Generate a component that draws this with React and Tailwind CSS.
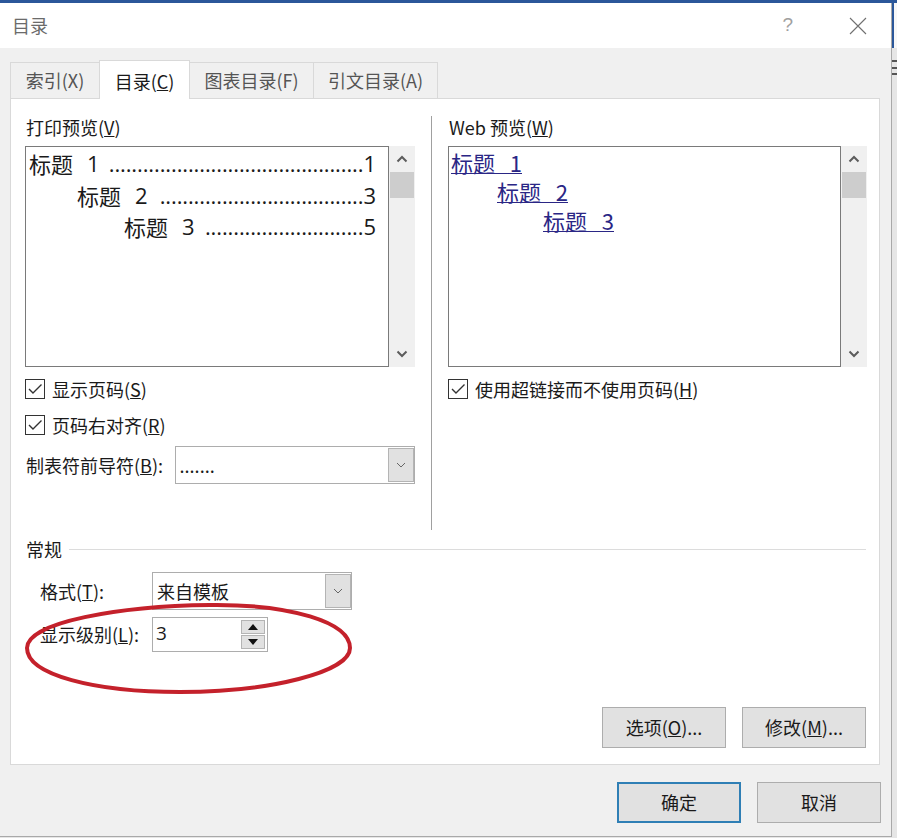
import React from "react";

const ChevUp = () => (
  <svg width="12" height="8" viewBox="0 0 12 8">
    <path d="M1.5 6.5 6 2l4.5 4.5" fill="none" stroke="#5c5c5c" strokeWidth="2" />
  </svg>
);

const ChevDown = () => (
  <svg width="12" height="8" viewBox="0 0 12 8">
    <path d="M1.5 1.5 6 6l4.5-4.5" fill="none" stroke="#5c5c5c" strokeWidth="2" />
  </svg>
);

function ScrollBar() {
  return (
    <div className="w-[26px] h-full bg-[#f0f0f0] flex flex-col">
      <div className="h-[26px] flex items-center justify-center">
        <ChevUp />
      </div>
      <div className="h-[26px] mx-px bg-[#cdcdcd]" />
      <div className="flex-1" />
      <div className="h-[26px] flex items-center justify-center">
        <ChevDown />
      </div>
    </div>
  );
}

function Checkbox({ children }) {
  return (
    <div className="flex items-center h-[20px]">
      <div className="w-[20px] h-[20px] border border-[#333] bg-white flex items-center justify-center">
        <svg width="18" height="18" viewBox="0 0 18 18">
          <path d="M3 9l4 4 8.5-8.5" fill="none" stroke="#333" strokeWidth="1.4" />
        </svg>
      </div>
      <span className="ml-[7px] text-[18px] leading-[20px]">{children}</span>
    </div>
  );
}

function Combo({ value, className }) {
  return (
    <div className={`flex h-[38px] border border-[#adadad] bg-white ${className}`}>
      <div className="flex-1 flex items-center pl-[4px] text-[18px]">{value}</div>
      <div className="w-[26px] my-px bg-[#e1e1e1] border border-[#b4b4b4] flex items-center justify-center">
        <svg width="10" height="6" viewBox="0 0 10 6">
          <path d="M1 1l4 4 4-4" fill="none" stroke="#666" strokeWidth="1" />
        </svg>
      </div>
    </div>
  );
}

// leader dots are counted per row so they fill the gap up to the page number
function TocRow({ pad, page, num, dots }) {
  return (
    <div className={`flex items-center h-[31.5px] pr-[12px] ${pad}`}>
      <span>标题</span>
      <span className="ml-[14px] font-['Open_Sans',sans-serif]">{num}</span>
      <span className="ml-auto whitespace-nowrap font-['Open_Sans',sans-serif]">
        <span className="tracking-[-0.12px]">{".".repeat(dots)}</span>
        {page}
      </span>
    </div>
  );
}

function WebRow({ pad, num }) {
  return (
    <div className={`h-[29px] flex items-center ${pad}`}>
      <span className="inline-block leading-[21px] border-b border-[#2a2685] text-[#2a2685] whitespace-pre">
        {"标题   " + num}
      </span>
    </div>
  );
}

function Button({ children, primary }) {
  return (
    <div
      className={`w-[124px] h-[41px] flex items-center justify-center text-[18px] bg-[#e1e1e1] ${
        primary ? "border-2 border-[#2f7fb5]" : "border border-[#adadad]"
      }`}
    >
      {children}
    </div>
  );
}

export default function App() {
  return (
    <div className="relative w-[897px] h-[838px] overflow-hidden bg-[#e6e6e6] text-[#1a1a1a] font-['Noto_Sans_CJK_SC',sans-serif]">
      <div className="h-[3px] bg-[#2b579a]" />
      <div className="flex h-[834px]">
        <div className="w-[892px] flex flex-col border-r border-b border-[#a9a9a9]">
          {/* title bar */}
          <div className="h-[45px] shrink-0 bg-white flex items-center pl-[12px]">
            <span className="text-[18px] text-[#6b6b6b]">目录</span>
            <span className="ml-auto text-[19px] text-[#a0a0a0] font-['Liberation_Sans',sans-serif]">?</span>
            <svg className="ml-[56px] mr-[24px]" width="18" height="18" viewBox="0 0 18 18">
              <path d="M1 1l16 16M17 1L1 17" stroke="#707070" strokeWidth="1.1" />
            </svg>
          </div>

          <div className="flex-1 bg-[#f0f0f0] pl-[10px] pt-[14px]">
            {/* tabs */}
            <div className="flex items-end h-[36px] text-[18px]">
              <div className="w-[89px] h-[36px] flex items-center justify-center border-t border-l border-[#d9d9d9] text-[#555]">
                索引(X)
              </div>
              <div className="relative z-10 w-[91px] h-[39px] -mb-px flex items-center justify-center bg-white border-t border-l border-r border-[#d9d9d9] pt-[2px]">
                目录(<u>C</u>)
              </div>
              <div className="w-[123px] h-[36px] flex items-center justify-center border-t border-[#d9d9d9] text-[#555]">
                图表目录(F)
              </div>
              <div className="w-[125px] h-[36px] flex items-center justify-center border-t border-l border-r border-[#d9d9d9] text-[#555]">
                引文目录(A)
              </div>
            </div>

            {/* panel */}
            <div className="w-[870px] h-[667px] bg-white border border-[#d9d9d9]">
              <div className="flex pl-[14px] pt-[17px]">
                <div className="w-[390px] flex flex-col">
                  <div className="h-[23px] leading-[23px] text-[18px] pl-px">
                    打印预览(<u>V</u>)
                  </div>
                  <div className="mt-[7px] flex h-[221px]">
                    <div className="w-[364px] border border-[#7a7a7a] bg-white pt-px text-[22px]">
                      <TocRow pad="pl-[3px]" num="1" page="1" dots={45} />
                      <TocRow pad="pl-[51px]" num="2" page="3" dots={36} />
                      <TocRow pad="pl-[98px]" num="3" page="5" dots={28} />
                    </div>
                    <ScrollBar />
                  </div>
                  <div className="mt-[12px]">
                    <Checkbox>
                      显示页码(<u>S</u>)
                    </Checkbox>
                  </div>
                  <div className="mt-[16px]">
                    <Checkbox>
                      页码右对齐(<u>R</u>)
                    </Checkbox>
                  </div>
                  <div className="mt-[11px] flex items-center">
                    <span className="w-[150px] text-[18px] pl-px">
                      制表符前导符(<u>B</u>):
                    </span>
                    <Combo className="w-[241px]" value="......." />
                  </div>
                </div>

                <div className="ml-[16px] self-start w-px h-[414px] bg-[#a0a0a0]" />

                <div className="ml-[16px] w-[419px] flex flex-col">
                  <div className="h-[23px] leading-[23px] text-[18px] pl-px">
                    Web 预览(<u>W</u>)
                  </div>
                  <div className="mt-[7px] flex h-[221px]">
                    <div className="w-[393px] border border-[#7a7a7a] bg-white pt-px text-[22px]">
                      <WebRow pad="pl-[2px]" num="1" />
                      <WebRow pad="pl-[48px]" num="2" />
                      <WebRow pad="pl-[94px]" num="3" />
                    </div>
                    <ScrollBar />
                  </div>
                  <div className="mt-[12px]">
                    <Checkbox>
                      使用超链接而不使用页码(<u>H</u>)
                    </Checkbox>
                  </div>
                </div>
              </div>

              {/* general */}
              <div className="mt-[8px] h-[22px] flex items-center pl-[15px] pr-[13px]">
                <span className="text-[18px]">常规</span>
                <div className="ml-[7px] flex-1 h-px bg-[#dcdcdc]" />
              </div>
              <div className="mt-[12px] flex items-center pl-[29px]">
                <span className="w-[112px] text-[18px]">
                  格式(<u>T</u>):
                </span>
                <Combo className="w-[200px]" value="来自模板" />
              </div>
              <div className="mt-[7px] flex items-center pl-[29px]">
                <span className="w-[112px] text-[18px]">
                  显示级别(<u>L</u>):
                </span>
                <div className="w-[116px] h-[35px] flex border border-[#adadad] bg-white">
                  <div className="flex-1 pl-[3px] text-[19px] leading-[30px] font-['Open_Sans',sans-serif]">3</div>
                  <div className="w-[24px] my-[2px] mr-[2px] flex flex-col gap-px">
                    <div className="flex-1 bg-[#e1e1e1] border border-[#b4b4b4] flex items-center justify-center">
                      <svg width="10" height="6" viewBox="0 0 10 6">
                        <path d="M0 6L5 0l5 6z" fill="#111" />
                      </svg>
                    </div>
                    <div className="flex-1 bg-[#e1e1e1] border border-[#b4b4b4] flex items-center justify-center">
                      <svg width="10" height="6" viewBox="0 0 10 6">
                        <path d="M0 0h10L5 6z" fill="#111" />
                      </svg>
                    </div>
                  </div>
                </div>
              </div>

              <div className="mt-[55px] flex justify-end gap-[16px] pr-[13px]">
                <Button>
                  选项(<u>O</u>)...
                </Button>
                <Button>
                  修改(<u>M</u>)...
                </Button>
              </div>
            </div>

            {/* dialog buttons */}
            <div className="w-[871px] mt-[17px] flex justify-end gap-[16px]">
              <Button primary>确定</Button>
              <Button>取消</Button>
            </div>
          </div>
        </div>

        {/* window behind the dialog */}
        <div className="flex-1 flex flex-col">
          <div className="h-[45px] border-l-2 border-[#2b579a] bg-[#f7f7f7]" />
          <div className="mt-[12px] h-[2px] bg-[#555]" />
          <div className="mt-[5px] h-[2px] bg-[#555]" />
          <div className="mt-[4px] h-[2px] bg-[#555]" />
          <div className="flex-1" />
        </div>
      </div>

      {/* red annotation ring */}
      <svg className="absolute left-0 top-0 pointer-events-none" width="897" height="838" viewBox="0 0 897 838">
        <path
          d="M27 648C27 622 120 606 210 605C290 604 350 622 350 648C350 672 270 692 180 692C95 692 27 675 27 648Z"
          fill="none"
          stroke="#c4212b"
          strokeWidth="4"
        />
      </svg>
    </div>
  );
}
